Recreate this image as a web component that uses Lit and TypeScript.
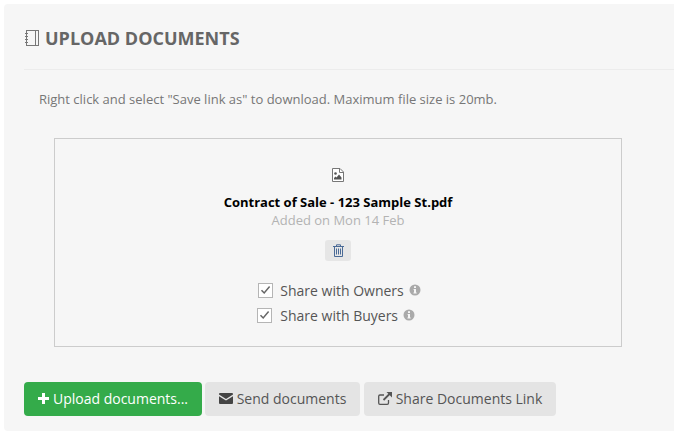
import { LitElement, html, css } from "lit";
import { customElement } from "lit/decorators.js";

@customElement("app-root")
export class AppRoot extends LitElement {
  static styles = css`
    :host { display: block; width: 674px; height: 433px; background: #fff; font-family: "Open Sans", sans-serif; font-size: 14px; color: #444; overflow: hidden; }
    .panel { margin: 4px 0 0 4px; height: 427px; box-sizing: border-box; background: #f6f6f6; border-radius: 4px 0 0 4px; padding: 0 0 0 20px; display: flex; flex-direction: column; }
    .head { height: 66px; box-sizing: border-box; border-bottom: 1px solid #ececec; display: flex; align-items: center; gap: 7px; padding-top: 3px; }
    .head svg { display: block; flex: none; margin-left: 1px; margin-right: -1px; }
    h2 { margin: 0; font-size: 18px; line-height: 24px; font-weight: 700; color: #666; }
    .desc { margin: 0; padding: 20px 0 0 15px; font-size: 13px; line-height: 18px; color: #777; height: 48px; box-sizing: content-box; }
    .box { margin-left: 30px; width: 568px; height: 209px; box-sizing: border-box; border: 1px solid #ccc; display: flex; flex-direction: column; align-items: center; padding-top: 29px; }
    .file { display: block; }
    .name { margin-top: 11px; font-size: 13px; line-height: 18px; font-weight: 700; color: #000; }
    .added { font-size: 13px; line-height: 18px; color: #b3b3b3; }
    .trash { margin-top: 11px; width: 26px; height: 21px; border-radius: 3px; background: #e6e6e6; display: flex; align-items: center; justify-content: center; }
    .checks { margin: 19px 0 0 2px; display: flex; flex-direction: column; align-items: flex-start; gap: 5px; }
    .check { display: flex; align-items: center; height: 20px; font-size: 14px; color: #555; }
    .check.owners { margin-left: 1px; }
    .cb { width: 13px; height: 13px; border: 1px solid #b5b5b5; background: #fff; margin-right: 7px; display: flex; align-items: center; justify-content: center; }
    .check.buyers .cb { margin-right: 8px; }
    .info { margin-left: 5px; display: block; }
    .actions { margin-top: 35px; display: flex; gap: 3px; }
    .btn { height: 34px; box-sizing: border-box; border-radius: 4px; background: #e4e4e4; color: #555; display: flex; align-items: center; justify-content: center; gap: 4px; font-size: 14px; white-space: nowrap; padding-bottom: 2px; }
    .btn.primary { background: #34ab4a; color: #fff; width: 178px; }
    .btn.send { width: 155px; }
    .btn.share { width: 192px; margin-left: 1px; }
    svg { flex: none; }
  `;

  private info() {
    return html`<svg class="info" width="12" height="12" viewBox="0 0 12 12"><circle cx="6" cy="6" r="5.5" fill="#aaa"/><rect x="5" y="2.2" width="2" height="1.8" fill="#f6f6f6"/><path d="M4.6 5h2.4v3.4h.7v1H4.4v-1H5V6h-.4z" fill="#f6f6f6"/></svg>`;
  }

  private check() {
    return html`<span class="cb"><svg width="11" height="10" viewBox="0 0 11 10"><path d="M1.5 5.2 4.2 8 9.6 1.6" fill="none" stroke="#666" stroke-width="1.5"/></svg></span>`;
  }

  render() {
    return html`
      <div class="panel">
        <div class="head">
          <svg width="14" height="16" viewBox="0 0 14 16" fill="none" stroke="#777"><rect x="1.5" y="0.5" width="12" height="15"/><path d="M10.5 1v14" stroke="#777"/><path d="M0 3.5h3M0 6.5h3M0 9.5h3M0 12.5h3"/></svg>
          <h2>UPLOAD DOCUMENTS</h2>
        </div>
        <p class="desc">Right click and select "Save link as" to download. Maximum file size is 20mb.</p>
        <div class="box">
          <svg class="file" width="12" height="14" viewBox="0 0 12 14"><path d="M.5.5h7.5l3.5 3.5v9.500H.5z" fill="#fff" stroke="#777"/><path d="M7.500.5v4h4" fill="none" stroke="#777"/><circle cx="3.500" cy="5.500" r="1.300" fill="#555"/><path d="M2 11.500V10l1.500-1.500 1 1 2.500-3 2.500 3v2z" fill="#555"/></svg>
          <div class="name">Contract of Sale - 123 Sample St.pdf</div>
          <div class="added">Added on Mon 14 Feb</div>
          <div class="trash">
            <svg width="11" height="13" viewBox="0 0 11 13" fill="none" stroke="#4a6a96"><path d="M0 2.500h11"/><path d="M3.500 2.500V.8h4v1.700"/><path d="M1.500 2.500v10h8v-10"/><path d="M3.500 4.500v6M5.500 4.500v6M7.500 4.500v6"/></svg>
          </div>
          <div class="checks">
            <div class="check owners">${this.check()}Share with Owners${this.info()}</div>
            <div class="check buyers">${this.check()}Share with Buyers${this.info()}</div>
          </div>
        </div>
        <div class="actions">
          <div class="btn primary"><svg width="11" height="11" viewBox="0 0 11 11"><path d="M4 0h3v4h4v3H7v4H4V7H0V4h4z" fill="#fff"/></svg>Upload documents...</div>
          <div class="btn send"><svg width="14" height="11" viewBox="0 0 14 11"><path d="M1 0h12a1 1 0 0 1 1 1v.6L7 6 0 1.600V1a1 1 0 0 1 1-1z" fill="#444"/><path d="M0 3.200 7 7.600l7-4.400V10a1 1 0 0 1-1 1H1a1 1 0 0 1-1-1z" fill="#444"/></svg>Send documents</div>
          <div class="btn share"><svg width="14" height="13" viewBox="0 0 14 13" fill="none" stroke="#555" stroke-width="1.300"><path d="M10.500 8v3a1.300 1.300 0 0 1-1.300 1.300H2A1.300 1.300 0 0 1 .7 11V4.300A1.300 1.300 0 0 1 2 3h4"/><path d="M5.500 8 12 1.500" stroke-width="1.800"/><path d="M8.500 0H14v5.500z" fill="#555" stroke="none"/></svg>Share Documents Link</div>
        </div>
      </div>
    `;
  }
}
